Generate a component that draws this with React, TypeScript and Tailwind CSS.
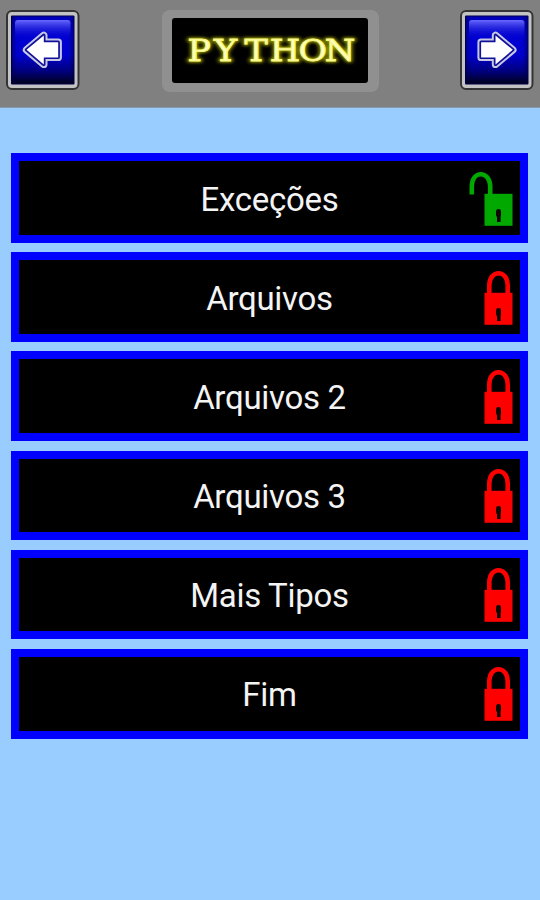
import React from 'react';

interface Lesson {
    id: number;
    title: string;
    unlocked: boolean;
}

const lessons: Lesson[] = [
    { id: 1, title: 'Exceções', unlocked: true },
    { id: 2, title: 'Arquivos', unlocked: false },
    { id: 3, title: 'Arquivos 2', unlocked: false },
    { id: 4, title: 'Arquivos 3', unlocked: false },
    { id: 5, title: 'Mais Tipos', unlocked: false },
    { id: 6, title: 'Fim', unlocked: false },
];

// Padlock, open (green) or closed (red)
const LockIcon: React.FC<{ unlocked: boolean }> = ({ unlocked }) => {
    const color = unlocked ? '#00a800' : '#ff0000';
    return (
        <svg width="44" height="56" viewBox="0 0 44 56" fill="none">
            {unlocked ? (
                <path d="M2.8 23.5V15C3.2 7.5 7 3.2 11.8 3.2S20.8 7.5 21.2 15V24" stroke={color} strokeWidth="4.6" />
            ) : (
                <path d="M20.3 24V15C20.6 7.5 24.7 3.2 29.5 3.2S38.4 7.5 38.7 15V24" stroke={color} strokeWidth="4.6" />
            )}
            <rect x="15.5" y="22.8" width="28" height="32" fill={color} />
            <rect x="27" y="38" width="5" height="8.5" rx="2.4" fill="#100800" />
            <rect x="28" y="43" width="3.6" height="8" fill="#100800" />
        </svg>
    );
};

const NavButton: React.FC<{ direction: 'left' | 'right' }> = ({ direction }) => {
    const arrow = 'M20.5 39.8 37.8 25.4V32.2H52.2V47.4H37.8V54.4Z';
    return (
        <button className="h-[80px] w-[74px]" aria-label={direction === 'left' ? 'Anterior' : 'Próximo'}>
            <svg width="74" height="80" viewBox="0 0 74 80" fill="none">
                <defs>
                    <linearGradient id={`face-${direction}`} x1="0" y1="0" x2="0" y2="1">
                        <stop offset="0" stopColor="#0000b8" />
                        <stop offset="0.3" stopColor="#0000d2" />
                        <stop offset="0.58" stopColor="#0000cc" />
                        <stop offset="0.82" stopColor="#00007c" />
                        <stop offset="1" stopColor="#00001c" />
                    </linearGradient>
                    <linearGradient id={`shine-${direction}`} x1="0" y1="0" x2="0" y2="1">
                        <stop offset="0" stopColor="#6868ff" />
                        <stop offset="1" stopColor="#1414dc" stopOpacity="0" />
                    </linearGradient>
                    <linearGradient id={`edge-${direction}`} x1="0" y1="0" x2="1" y2="0">
                        <stop offset="0" stopColor="#000040" stopOpacity="0.45" />
                        <stop offset="0.08" stopColor="#000040" stopOpacity="0" />
                        <stop offset="0.92" stopColor="#000040" stopOpacity="0" />
                        <stop offset="1" stopColor="#000040" stopOpacity="0.45" />
                    </linearGradient>
                </defs>
                <rect x="1" y="1" width="71.5" height="78" rx="5" fill="#c3c3c3" stroke="#343434" strokeWidth="2" />
                <rect x="5" y="5.5" width="63.5" height="69" rx="1" fill="#000048" />
                <rect x="6" y="6.5" width="61.5" height="67" fill={`url(#face-${direction})`} />
                <rect x="6" y="6.5" width="61.5" height="67" fill={`url(#edge-${direction})`} />
                <rect x="9" y="10" width="55.5" height="18" rx="3" fill={`url(#shine-${direction})`} />
                <g transform={direction === 'left' ? undefined : 'translate(73.3 0) scale(-1 1)'} strokeLinejoin="round">
                    <path d={arrow} stroke="#c8c8e2" strokeWidth="7.4" />
                    <path d={arrow} stroke="#10109a" strokeWidth="3.4" />
                    <path d={arrow} fill="#fff" />
                </g>
            </svg>
        </button>
    );
};

// Neon sign with the course name
const NeonSign: React.FC = () => (
    <div className="h-[82px] w-[217px] rounded-[8px] bg-[#909090] p-[9px] pl-[10px] pt-[8px] mt-[-0.5px]">
        <svg width="197" height="65" viewBox="0 0 197 65">
            <defs>
                <filter id="neon-glow" x="-10%" y="-40%" width="120%" height="180%">
                    <feGaussianBlur stdDeviation="1.8" />
                </filter>
            </defs>
            <rect width="196" height="65" rx="3" fill="#000" />
            <g fontFamily="'DejaVu Serif', serif" fontSize="29" textAnchor="middle" transform="translate(0 42.5) scale(1.2 1)">
                <text x="22.7 44.6 70 94.2 117.3 140" y="0" fill="#a8a800" stroke="#a8a800" strokeWidth="3" filter="url(#neon-glow)">PYTHON</text>
                <text x="22.7 44.6 70 94.2 117.3 140" y="0" fill="#ffffc0" stroke="#f6f67c" strokeWidth="0.9">PYTHON</text>
            </g>
        </svg>
    </div>
);

const LessonButton: React.FC<{ lesson: Lesson }> = ({ lesson }) => (
    <button className="relative flex h-[89.8px] w-full items-center justify-center border-8 border-[#0000ff] bg-black">
        <span className="pt-[2px] font-['Roboto',sans-serif] text-[33px] leading-none tracking-[-0.3px] text-[#f4f4f4]">{lesson.title}</span>
        <span className="absolute right-[7.5px] top-[9.5px]">
            <LockIcon unlocked={lesson.unlocked} />
        </span>
    </button>
);

const App: React.FC = () => {
    return (
        <div className="min-h-[900px] w-full bg-[#99ccff]">
            <header className="flex h-[108px] items-start justify-between border-b border-[#8698aa] bg-[#808080] pl-[6px] pr-[6px] pt-[10px]">
                <NavButton direction="left" />
                <NeonSign />
                <NavButton direction="right" />
            </header>

            <main className="flex flex-col gap-[9.3px] pl-[11px] pr-[12px] pt-[45.3px]">
                {lessons.map(lesson => (
                    <LessonButton key={lesson.id} lesson={lesson} />
                ))}
            </main>
        </div>
    );
};

export default App;
